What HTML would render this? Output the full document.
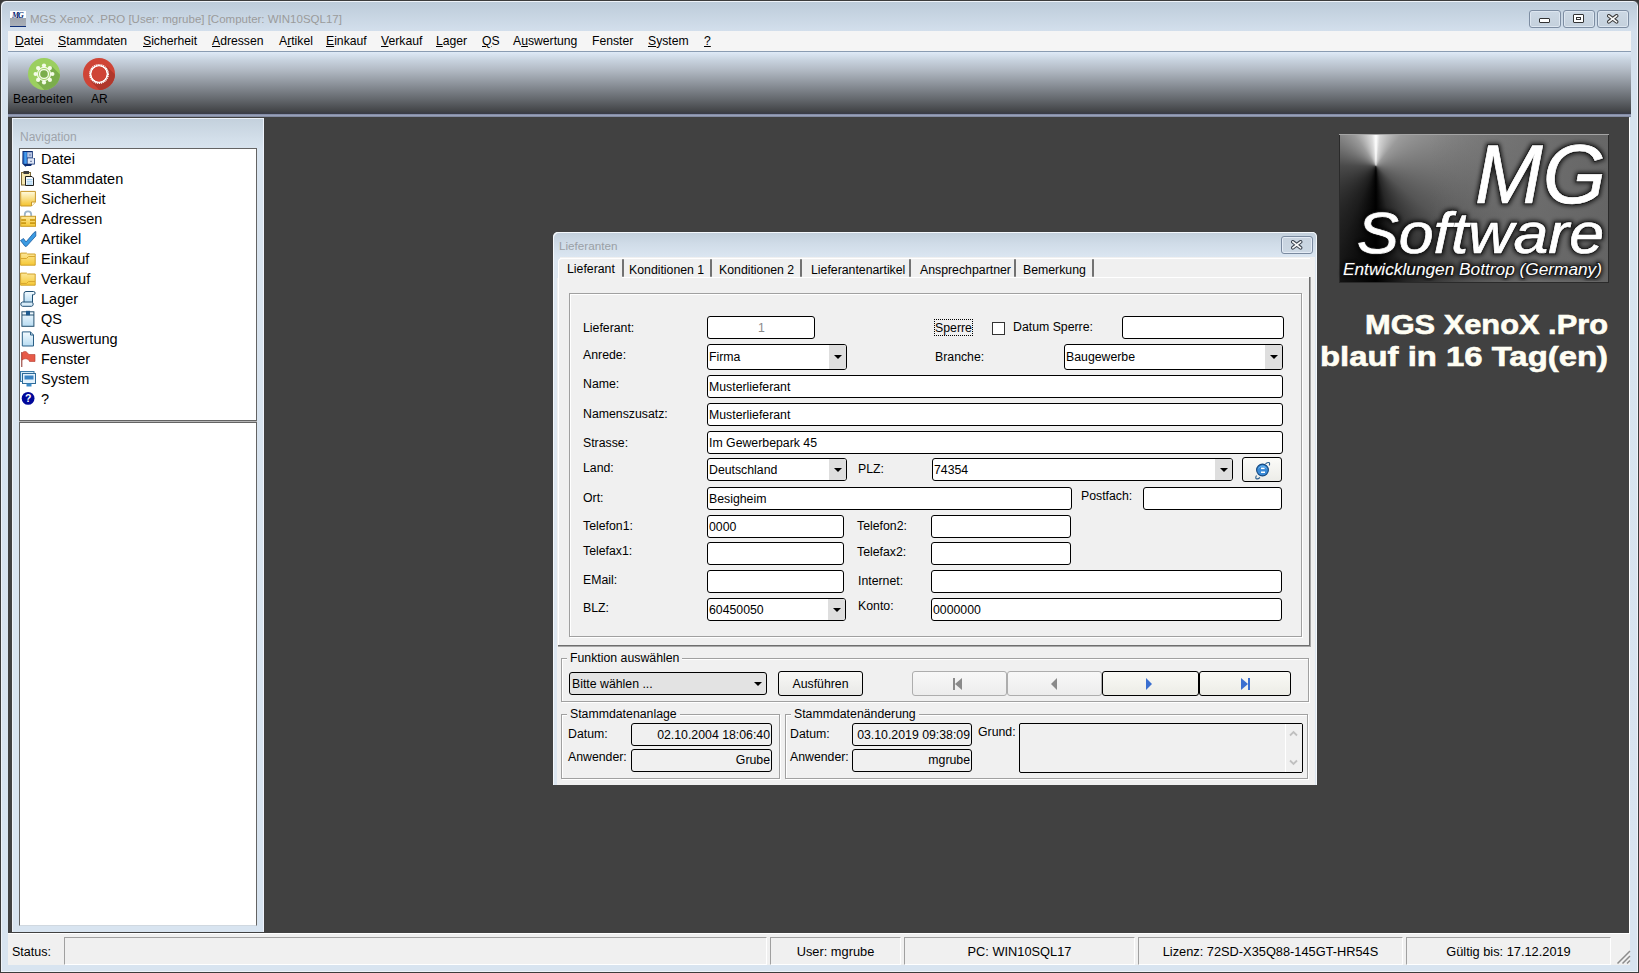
<!DOCTYPE html>
<html><head><meta charset="utf-8">
<style>
*{margin:0;padding:0;box-sizing:border-box}
html,body{width:1639px;height:973px;overflow:hidden;background:#3a3a3a}
body{font-family:"Liberation Sans",sans-serif;position:relative;color:#000}
.a{position:absolute}
#win{left:0;top:0;width:1639px;height:973px;background:linear-gradient(#bccbd9 0px,#d3dfec 30px,#d7e3ef 120px,#d8e4f0 973px);border:1px solid #3c3c3c;border-radius:6px 6px 0 0;box-shadow:inset 1px 1px 0 #eef3f9,inset -1px -1px 0 #eef3f9}
#title{left:30px;top:13px;font-size:11.5px;color:#9b9b9b;white-space:nowrap}
#menubar{left:8px;top:31px;width:1623px;height:21px;background:#f5f5f5;border-bottom:1px solid #8a9cb2}
.mi{position:absolute;top:3px;font-size:12.2px;white-space:nowrap}
.mi u{text-decoration:underline;text-underline-offset:1px}
#toolbar{left:8px;top:52px;width:1623px;height:62px;background:linear-gradient(#dfeaf7 0px,#c8d3df 8px,#b2bac4 18px,#8a9098 33px,#62666b 48px,#434548 59px,#3a3c46 61px)}
#tbline{left:8px;top:114px;width:1623px;height:3px;background:linear-gradient(#7c84a0,#98a0b8 50%,#7a8298)}
#mdi{left:8px;top:117px;width:1621px;height:816px;background:#414141;box-shadow:1px 1px 0 #fff}
#nav{left:12px;top:118px;width:252px;height:814px;background:linear-gradient(#c3d0dc,#d2dee9 20px,#d9e4ef 32px,#d8e4f0)}
.nl{left:41px;font-size:14.5px;line-height:20px;white-space:nowrap}
#status{left:8px;top:933px;width:1622px;height:32px;background:#f0f0f0;border-top:1px solid #fff}
.sp{position:absolute;top:3px;height:28px;border-top:1px solid #a0a0a0;border-left:1px solid #a0a0a0;border-right:1px solid #fff;border-bottom:1px solid #fff;font-size:12.8px;text-align:center;line-height:26px;padding-top:1px;white-space:nowrap}
.lb{position:absolute;font-size:12.3px;line-height:14px;white-space:nowrap}
.tx{position:absolute;background:#fff;border:1px solid #000;border-radius:3px;font-size:12.3px;white-space:nowrap;padding-left:1px;padding-top:1px;overflow:hidden}
.dd{position:absolute;right:0;top:0;bottom:0;width:17px;background:#dedede}
.dd:after{content:"";position:absolute;left:5px;top:50%;margin-top:-2px;border-left:4px solid transparent;border-right:4px solid transparent;border-top:4px solid #000}
.gb{position:absolute;border:1px solid #c0c0c0;box-shadow:inset 1px 1px 0 #fff,1px 1px 0 #fff}
.gt{position:absolute;background:#f0f0f0;font-size:12.3px;line-height:14px;padding:0 3px;white-space:nowrap}
.tsep{top:259px;width:2px;height:18px;background:#727272;border-radius:1px}
.nb{top:671px;height:25px;border:1px solid #000;border-radius:3px;background:linear-gradient(#f8f8f8,#ececec)}
</style></head><body>
<div id="win" class="a"></div>
<div class="a" style="left:10px;top:11px;width:16px;height:16px;background:linear-gradient(#fff 0,#fff 7px,#9ea4ad 7px,#aab0b8 15px,#10307a 15px);"></div>
<div class="a" style="left:12px;top:11px;font:bold italic 8px 'Liberation Serif',serif;color:#001a6e;letter-spacing:-1px">MG</div>
<div id="title" class="a">MGS XenoX .PRO [User: mgrube] [Computer: WIN10SQL17]</div>
<!-- window buttons -->
<div class="a" style="left:1529px;top:10px;width:32px;height:18px;border:1px solid #7d8da2;border-radius:3px;background:linear-gradient(#ccd8e4,#c4d0dc);box-shadow:inset 0 0 0 1px #dde6f0"><div class="a" style="left:9px;top:7px;width:11px;height:5px;border:1px solid #333;background:#fff;border-radius:1px"></div></div>
<div class="a" style="left:1563px;top:10px;width:32px;height:18px;border:1px solid #7d8da2;border-radius:3px;background:linear-gradient(#ccd8e4,#c4d0dc);box-shadow:inset 0 0 0 1px #dde6f0"><div class="a" style="left:9px;top:3px;width:11px;height:9px;border:1px solid #333;background:#fff;border-radius:1px"><div class="a" style="left:2px;top:2px;width:5px;height:3px;border:1px solid #333"></div></div></div>
<div class="a" style="left:1597px;top:10px;width:32px;height:18px;border:1px solid #7d8da2;border-radius:3px;background:linear-gradient(#ccd8e4,#c4d0dc);box-shadow:inset 0 0 0 1px #dde6f0"><svg class="a" style="left:9px;top:3px" width="12" height="10" viewBox="0 0 12 10"><path d="M1.8 1.8 L9.6 7.8 M9.6 1.8 L1.8 7.8" stroke="#3a3a3a" stroke-width="3.6" stroke-linecap="round"/><path d="M1.8 1.8 L9.6 7.8 M9.6 1.8 L1.8 7.8" stroke="#fafafa" stroke-width="1.7" stroke-linecap="round"/></svg></div>
<div id="menubar" class="a">
<span class="mi" style="left:7px"><u>D</u>atei</span>
<span class="mi" style="left:50px"><u>S</u>tammdaten</span>
<span class="mi" style="left:135px"><u>S</u>icherheit</span>
<span class="mi" style="left:204px"><u>A</u>dressen</span>
<span class="mi" style="left:271px">A<u>r</u>tikel</span>
<span class="mi" style="left:318px"><u>E</u>inkauf</span>
<span class="mi" style="left:373px"><u>V</u>erkauf</span>
<span class="mi" style="left:428px"><u>L</u>ager</span>
<span class="mi" style="left:474px"><u>Q</u>S</span>
<span class="mi" style="left:505px">A<u>u</u>swertung</span>
<span class="mi" style="left:584px">Fenster</span>
<span class="mi" style="left:640px"><u>S</u>ystem</span>
<span class="mi" style="left:696px"><u>?</u></span>
</div>
<div id="toolbar" class="a"></div>
<div id="tbline" class="a"></div>
<!-- toolbar icons -->
<svg class="a" style="left:27px;top:57px" width="34" height="34" viewBox="0 0 34 34">
 <defs><clipPath id="cg"><circle cx="17" cy="17" r="16"/></clipPath></defs>
 <circle cx="17" cy="17" r="16" fill="#9bcf5f"/>
 <path d="M24.8 9.2 L54.8 39.2 L39.2 54.8 L9.2 24.8 Z" fill="#7bad4c" clip-path="url(#cg)"/>
 <g fill="#f4fbe8">
  <circle cx="17" cy="17" r="7.2"/>
  <circle cx="17" cy="8.6" r="2.1"/><circle cx="17" cy="25.4" r="2.1"/><circle cx="8.6" cy="17" r="2.1"/><circle cx="25.4" cy="17" r="2.1"/>
  <circle cx="11.1" cy="11.1" r="2.1"/><circle cx="22.9" cy="11.1" r="2.1"/><circle cx="11.1" cy="22.9" r="2.1"/><circle cx="22.9" cy="22.9" r="2.1"/>
 </g>
 <circle cx="17" cy="17" r="5.6" fill="none" stroke="#9bcf5f" stroke-width="0.9"/>
 <circle cx="17" cy="17" r="3.8" fill="#7bad4c"/>
</svg>
<svg class="a" style="left:82px;top:57px" width="34" height="34" viewBox="0 0 34 34">
 <defs><clipPath id="cr"><circle cx="17" cy="17" r="16"/></clipPath></defs>
 <circle cx="17" cy="17" r="16" fill="#cf4436"/>
 <path d="M24.8 9.2 L54.8 39.2 L39.2 54.8 L9.2 24.8 Z" fill="#b0382c" clip-path="url(#cr)"/>
 <circle cx="17" cy="17" r="9" fill="none" stroke="#fff" stroke-width="2" stroke-dasharray="1.1 0.75"/>
 <circle cx="17" cy="17" r="8.3" fill="none" stroke="#fff" stroke-width="1.6"/>
 <circle cx="17" cy="17" r="7.4" fill="#cf4436"/>
</svg>
<div class="a" style="left:13px;top:92px;font-size:12px;letter-spacing:0.2px;color:#000">Bearbeiten</div>
<div class="a" style="left:91px;top:92px;font-size:12px;color:#000">AR</div>
<div id="mdi" class="a"></div>
<div id="nav" class="a"></div>
<div class="a" style="left:12px;top:118px;width:252px;height:1px;background:#eef3f9"></div>
<div class="a" style="left:12px;top:118px;width:1px;height:814px;background:#eef3f9"></div>
<div class="a" style="left:263px;top:118px;width:1px;height:814px;background:#eef3fc"></div>
<div class="a" style="left:20px;top:130px;font-size:12px;color:#9ea4ab">Navigation</div>
<div class="a" style="left:19px;top:148px;width:238px;height:273px;background:#fff;border:1px solid #646464"></div>
<div class="a" style="left:19px;top:421px;width:238px;height:1px;background:#b4b4b4"></div>
<div class="a" style="left:19px;top:422px;width:238px;height:504px;background:#fff;border:1px solid #646464;border-bottom-color:#d0d8e0"></div>
<div class="a nl" style="top:149px">Datei</div>
<div class="a nl" style="top:169px">Stammdaten</div>
<div class="a nl" style="top:189px">Sicherheit</div>
<div class="a nl" style="top:209px">Adressen</div>
<div class="a nl" style="top:229px">Artikel</div>
<div class="a nl" style="top:249px">Einkauf</div>
<div class="a nl" style="top:269px">Verkauf</div>
<div class="a nl" style="top:289px">Lager</div>
<div class="a nl" style="top:309px">QS</div>
<div class="a nl" style="top:329px">Auswertung</div>
<div class="a nl" style="top:349px">Fenster</div>
<div class="a nl" style="top:369px">System</div>
<div class="a nl" style="top:389px">?</div>
<svg class="a" style="left:20px;top:149px" width="18" height="260" viewBox="0 0 18 260">
 <defs>
 <linearGradient id="gy" x1="0" y1="0" x2="0" y2="1"><stop offset="0" stop-color="#fffbe0"/><stop offset="1" stop-color="#f4c22c"/></linearGradient>
 <linearGradient id="gy2" x1="0" y1="0" x2="0" y2="1"><stop offset="0" stop-color="#fde79a"/><stop offset="1" stop-color="#f5c834"/></linearGradient>
 <linearGradient id="gb" x1="0" y1="0" x2="0" y2="1"><stop offset="0" stop-color="#f4fbff"/><stop offset="1" stop-color="#b8dcf2"/></linearGradient>
 <linearGradient id="gbl" x1="0" y1="0" x2="1" y2="0"><stop offset="0" stop-color="#1c5cc0"/><stop offset="0.5" stop-color="#4aa4ee"/><stop offset="1" stop-color="#2a70d0"/></linearGradient>
 </defs>
 <!-- Datei: filing cabinet -->
 <path d="M2.5 2 H12.8 V9 H14.8 V15.5 H12 L11 17 H6.5 L5.5 17.8 L2.3 14.8 Z" fill="#0c2c70"/>
 <rect x="3.3" y="3" width="3.8" height="11.8" fill="url(#gbl)"/>
 <rect x="7.2" y="3.2" width="4.8" height="5.3" fill="#b9c8e6"/>
 <rect x="7.6" y="9.3" width="6.4" height="5.4" fill="#dde5f5"/>
 <rect x="9" y="5.5" width="2" height="1" fill="#6878a0"/>
 <rect x="10" y="11.8" width="2" height="1" fill="#6878a0"/>
 <!-- Stammdaten: clipboard -->
 <rect x="1.5" y="23.5" width="9" height="12.5" fill="#f4e6b0" stroke="#7d6a38"/>
 <rect x="3.5" y="22" width="5.5" height="3" fill="#3c3c3c"/>
 <path d="M5.5 27.5 H12 L13.5 29 V36.5 H5.5 Z" fill="#f6faff" stroke="#1e1e1e"/>
 <rect x="6.8" y="30" width="5.7" height="1.3" fill="#9fcdee"/>
 <rect x="6.8" y="32.2" width="5.7" height="1.3" fill="#9fcdee"/>
 <rect x="6.8" y="34.4" width="5.7" height="1.3" fill="#9fcdee"/>
 <!-- Sicherheit: sticky note -->
 <path d="M0.7 42.4 H15.4 V53 L11.5 57 H0.7 Z" fill="url(#gy)" stroke="#c9982a"/>
 <path d="M11.5 57 V53 H15.4" fill="#fffce8" stroke="#c9982a"/>
 <!-- Adressen: lock -->
 <path d="M4.8 67.5 V65.5 A3.2 3.2 0 0 1 11.2 65.5 V67.5" fill="none" stroke="#9cb4c8" stroke-width="1.8"/>
 <rect x="0.7" y="67.3" width="14.8" height="10" fill="url(#gy2)" stroke="#c99a26"/>
 <rect x="1.2" y="70.2" width="4.8" height="1.6" fill="#c8940e"/><rect x="10" y="70.2" width="5" height="1.6" fill="#c8940e"/>
 <rect x="1.2" y="73.3" width="4.8" height="1.6" fill="#c8940e"/><rect x="10" y="73.3" width="5" height="1.6" fill="#c8940e"/>
 <!-- Artikel: check -->
 <path d="M0.5 91.5 L3.5 89.5 L6 93 L14 83.5 L15.8 82.5 L15.8 87 L6.5 97.3 L5 97.3 Z" fill="#3b9be2" stroke="#1a5a9e" stroke-width="0.8" stroke-linejoin="round"/>
 <!-- Einkauf folder -->
 <path d="M0.6 104.1 H6.5 L7.5 105 H15.2 V116.2 H0.6 Z" fill="url(#gy2)" stroke="#d1a22a"/>
 <path d="M0.8 109.5 H6.5 L8.5 107.5 H15" fill="none" stroke="#d9a830" stroke-width="1"/>
 <!-- Verkauf folder -->
 <path d="M0.6 124.1 H6.5 L7.5 125 H15.2 V136.2 H0.6 Z" fill="url(#gy2)" stroke="#d1a22a"/>
 <path d="M0.8 134.5 H6.5 L8.5 132.5 H15" fill="none" stroke="#d9a830" stroke-width="1"/>
 <!-- Lager scroll -->
 <path d="M4 153 V144.5 A2 2 0 0 1 6 142.5 H13.5 A1.6 1.6 0 0 1 13.5 145.7 H12.5 V153" fill="url(#gb)" stroke="#1e4e72" stroke-width="1"/>
 <path d="M2.5 153 H11.5 A2.2 2.2 0 0 1 11.5 157.3 H2.5 A2.2 2.2 0 0 1 2.5 153 Z" fill="#d8ecf8" stroke="#1e4e72" stroke-width="1"/>
 <!-- QS box -->
 <rect x="1.9" y="162.8" width="12" height="14.5" fill="url(#gb)" stroke="#26506e"/>
 <path d="M2 166 H14" stroke="#26506e" stroke-width="1"/>
 <rect x="6" y="161.8" width="4" height="4.5" fill="#1f5a8e"/>
 <!-- Auswertung doc -->
 <path d="M2.3 182.9 H10.5 L13.5 186 V197 H2.3 Z" fill="url(#gb)" stroke="#2b5f86"/>
 <path d="M10.5 182.9 V186 H13.5" fill="none" stroke="#2b5f86"/>
 <!-- Fenster flag -->
 <path d="M1.8 203 V218" stroke="#8a2a22" stroke-width="1"/>
 <path d="M2 204.5 C3 202 6 201.5 8 204.5 L8.5 205.5 H15 V212.5 H9.5 C8.5 209.5 5 209 2 211 Z" fill="#e65a48" stroke="#b23a2e" stroke-width="0.6"/>
 <!-- System monitor -->
 <rect x="0.5" y="222.5" width="13.5" height="10" fill="#d4eaf8" stroke="#3a7aa8"/>
 <rect x="2.5" y="224.5" width="13" height="10" fill="#e4f2fc" stroke="#2e6a98"/>
 <rect x="4.5" y="226.5" width="9" height="4" fill="#3a84c4"/>
 <rect x="6.5" y="234.5" width="5" height="3" fill="#3a8ac8"/>
 <!-- ? -->
 <circle cx="8.1" cy="249.4" r="6.4" fill="#00089a"/>
 <text x="8.1" y="253.4" font-family="Liberation Sans" font-weight="bold" font-size="10.5" fill="#fff" text-anchor="middle">?</text>
</svg>
<div class="a" style="left:1339px;top:134px;width:270px;height:149px;background:#2a2a2a;border-top:1px solid #a4a4a4"></div>
<div class="a" style="left:1340px;top:135px;width:268px;height:147px;background:conic-gradient(from 0deg at 36px 31px,#fff 0deg,#d4d4d4 8deg,#9a9a9a 40deg,#757575 90deg,#555 130deg,#262626 165deg,#000 180deg,#1c1c1c 205deg,#4a4a4a 270deg,#9a9a9a 325deg,#dcdcdc 352deg,#fff 360deg)"></div>
<div class="a" style="left:1340px;top:135px;width:268px;height:147px;background:linear-gradient(90deg,rgba(110,110,110,0) 0px,rgba(110,110,110,0) 90px,rgba(108,108,108,0.85) 200px,rgba(100,100,100,0.9) 268px)"></div>
<svg class="a" style="left:1320px;top:120px" width="319" height="260" viewBox="1320 120 319 260">
 <defs>
  <filter id="glow" x="-10%" y="-10%" width="120%" height="120%">
   <feMorphology in="SourceAlpha" operator="dilate" radius="1" result="d"/>
   <feGaussianBlur in="d" stdDeviation="2" result="b"/>
   <feFlood flood-color="#000" flood-opacity="0.75"/>
   <feComposite in2="b" operator="in" result="s"/>
   <feMerge><feMergeNode in="s"/><feMergeNode in="SourceGraphic"/></feMerge>
  </filter>
 </defs>
 <defs><g id="lt" font-family="Liberation Sans" font-style="italic">
  <text x="1475" y="203" font-size="83" textLength="131" lengthAdjust="spacingAndGlyphs">MG</text>
  <text x="1357" y="252.5" font-size="58" textLength="247" lengthAdjust="spacingAndGlyphs">Software</text>
</g>
 <g id="ls" font-family="Liberation Sans" font-style="italic"><text x="1343" y="274.5" font-size="16.8" textLength="259" lengthAdjust="spacingAndGlyphs">Entwicklungen Bottrop (Germany)</text></g></defs>
 <use href="#lt" filter="url(#glow)" fill="#fff" stroke="#1a1a1a" stroke-width="2.4"/>
 <use href="#lt" fill="#fff" stroke="#fff" stroke-width="0.7"/>
 <use href="#ls" filter="url(#glow)" fill="#fff" stroke="#1a1a1a" stroke-width="1.6"/>
 <use href="#ls" fill="#fff"/>
 <g font-family="Liberation Sans" font-weight="bold" fill="#fffef4" stroke="#fffef4" stroke-width="0.6">
  <text x="1365" y="333.7" font-size="27" textLength="243" lengthAdjust="spacingAndGlyphs">MGS XenoX .Pro</text>
  <text x="1320" y="365.8" font-size="27" textLength="288" lengthAdjust="spacingAndGlyphs">blauf in 16 Tag(en)</text>
 </g>
</svg>
<!-- dialog frame -->
<div class="a" style="left:553px;top:232px;width:764px;height:553px;border-radius:5px 5px 0 0;background:linear-gradient(#c2cfdb 0px,#d0dce8 12px,#dbe6f1 25px,#dce6f0 40px,#dce6f0 553px);box-shadow:inset 1px 1px 0 #f4f8fc,inset -1px 0 0 #f4f8fc"></div>
<div class="a" style="left:559px;top:239px;font-size:11.7px;color:#9aa0a6">Lieferanten</div>
<div class="a" style="left:1281px;top:236px;width:32px;height:18px;border:1px solid #7a8aa0;border-radius:3px;background:linear-gradient(#c8d3df,#ccd8e4);box-shadow:inset 0 0 0 1px #e4ecf6"><svg class="a" style="left:9px;top:3px" width="12" height="10" viewBox="0 0 12 10"><path d="M1.8 1.8 L9.6 7.8 M9.6 1.8 L1.8 7.8" stroke="#3c4450" stroke-width="3.6" stroke-linecap="round"/><path d="M1.8 1.8 L9.6 7.8 M9.6 1.8 L1.8 7.8" stroke="#fafafa" stroke-width="1.7" stroke-linecap="round"/></svg></div>
<!-- client -->
<div class="a" style="left:557px;top:257px;width:758px;height:528px;background:#f0f0f0"></div>
<!-- tabs -->
<div class="a" style="left:558px;top:258px;width:752px;height:1px;background:#fff"></div>
<div class="a" style="left:558px;top:258px;width:1px;height:388px;background:#fff"></div>
<div class="a" style="left:558px;top:645px;width:753px;height:2px;background:#6e6e6e;border-bottom:1px solid #a8a8a8"></div>
<div class="a" style="left:1309px;top:277px;width:2px;height:369px;background:#6e6e6e;border-right:1px solid #a8a8a8"></div>
<div class="a" style="left:559px;top:277px;width:750px;height:1px;background:#fff"></div>
<div class="a" style="left:557px;top:257px;width:3px;height:21px;background:#dce6f0"></div><div class="a" style="left:558px;top:258px;width:64px;height:20px;background:#f0f0f0;border-top:1px solid #fff;border-left:1px solid #fff;border-radius:4px 0 0 0"></div>
<div class="a tsep" style="left:622px"></div>
<div class="a tsep" style="left:710px"></div>
<div class="a tsep" style="left:800px"></div>
<div class="a tsep" style="left:909px"></div>
<div class="a tsep" style="left:1014px"></div>
<div class="a tsep" style="left:1092px"></div>
<div class="lb" style="left:567px;top:262px">Lieferant</div>
<div class="lb" style="left:629px;top:263px">Konditionen 1</div>
<div class="lb" style="left:719px;top:263px">Konditionen 2</div>
<div class="lb" style="left:811px;top:263px">Lieferantenartikel</div>
<div class="lb" style="left:920px;top:263px">Ansprechpartner</div>
<div class="lb" style="left:1023px;top:263px">Bemerkung</div>
<!-- inner groupbox -->
<div class="a" style="left:569px;top:293px;width:733px;height:344px;border:1px solid #a0a0a0;box-shadow:1px 1px 0 #fff,inset 1px 1px 0 #fff"></div>
<!-- labels -->
<div class="lb" style="left:583px;top:321px">Lieferant:</div>
<div class="lb" style="left:583px;top:348px">Anrede:</div>
<div class="lb" style="left:583px;top:377px">Name:</div>
<div class="lb" style="left:583px;top:407px">Namenszusatz:</div>
<div class="lb" style="left:583px;top:436px">Strasse:</div>
<div class="lb" style="left:583px;top:461px">Land:</div>
<div class="lb" style="left:583px;top:491px">Ort:</div>
<div class="lb" style="left:583px;top:519px">Telefon1:</div>
<div class="lb" style="left:583px;top:544px">Telefax1:</div>
<div class="lb" style="left:583px;top:573px">EMail:</div>
<div class="lb" style="left:583px;top:601px">BLZ:</div>
<div class="a" style="left:934px;top:319px;width:39px;height:17px;border:1px dotted #000"></div><div class="lb" style="left:935px;top:321px">Sperre</div>
<div class="a" style="left:992px;top:322px;width:13px;height:13px;border:1px solid #333;background:#fff"></div>
<div class="lb" style="left:1013px;top:320px">Datum Sperre:</div>
<div class="lb" style="left:935px;top:350px">Branche:</div>
<div class="lb" style="left:858px;top:462px">PLZ:</div>
<div class="lb" style="left:1081px;top:489px">Postfach:</div>
<div class="lb" style="left:857px;top:519px">Telefon2:</div>
<div class="lb" style="left:857px;top:545px">Telefax2:</div>
<div class="lb" style="left:858px;top:574px">Internet:</div>
<div class="lb" style="left:858px;top:599px">Konto:</div>
<!-- fields -->
<div class="tx" style="left:707px;top:316px;width:108px;height:23px;line-height:21px;text-align:center;color:#8a8a8a">1</div>
<div class="tx" style="left:1122px;top:316px;width:162px;height:23px"></div>
<div class="tx" style="left:707px;top:344px;width:140px;height:26px;line-height:24px;padding-top:0">Firma<div class="dd"></div></div>
<div class="tx" style="left:1064px;top:344px;width:219px;height:26px;line-height:24px;padding-top:0">Baugewerbe<div class="dd"></div></div>
<div class="tx" style="left:707px;top:375px;width:576px;height:23px;line-height:21px">Musterlieferant</div>
<div class="tx" style="left:707px;top:403px;width:576px;height:23px;line-height:21px">Musterlieferant</div>
<div class="tx" style="left:707px;top:431px;width:576px;height:23px;line-height:21px">Im Gewerbepark 45</div>
<div class="tx" style="left:707px;top:458px;width:140px;height:23px;line-height:21px">Deutschland<div class="dd"></div></div>
<div class="tx" style="left:932px;top:458px;width:301px;height:23px;line-height:21px">74354<div class="dd"></div></div>
<div class="a" style="left:1242px;top:457px;width:40px;height:25px;border:1px solid #000;border-radius:3px;background:linear-gradient(#fbfbf8,#ecece8)"><svg class="a" style="left:10px;top:2px" width="20" height="20" viewBox="0 0 20 20"><path d="M3.5 15.5 C1.5 19 4 20 7 17.5 M12.5 3.8 C15.5 1.8 17.5 2 16.2 5.5" fill="none" stroke="#2a5f8e" stroke-width="1.1"/><circle cx="9.5" cy="10" r="5.9" fill="#3a8ad6" stroke="#164a80" stroke-width="1.1"/><path d="M5.5 8.5 A4.5 4.5 0 0 1 13.5 8.5" fill="none" stroke="#6ab8f2" stroke-width="1"/><rect x="8" y="7.6" width="3.6" height="1.5" fill="#fff"/><rect x="8" y="11.5" width="4" height="1.5" fill="#fff"/></svg></div>
<div class="tx" style="left:707px;top:487px;width:365px;height:23px;line-height:21px">Besigheim</div>
<div class="tx" style="left:1143px;top:487px;width:139px;height:23px"></div>
<div class="tx" style="left:707px;top:515px;width:137px;height:23px;line-height:21px">0000</div>
<div class="tx" style="left:931px;top:515px;width:140px;height:23px"></div>
<div class="tx" style="left:707px;top:542px;width:137px;height:23px"></div>
<div class="tx" style="left:931px;top:542px;width:140px;height:23px"></div>
<div class="tx" style="left:707px;top:570px;width:137px;height:23px"></div>
<div class="tx" style="left:931px;top:570px;width:351px;height:23px"></div>
<div class="tx" style="left:707px;top:598px;width:139px;height:23px;line-height:21px">60450050<div class="dd"></div></div>
<div class="tx" style="left:931px;top:598px;width:351px;height:23px;line-height:21px">0000000</div>
<!-- Funktion groupbox -->
<div class="a" style="left:561px;top:658px;width:748px;height:44px;border:1px solid #a0a0a0;box-shadow:1px 1px 0 #fff,inset 1px 1px 0 #fff"></div>
<div class="gt" style="left:567px;top:651px">Funktion auswählen</div>
<div class="tx" style="left:569px;top:672px;width:198px;height:23px;line-height:21px;background:#e3e3e3;padding-left:2px">Bitte wählen ...<div class="dd" style="background:transparent"></div></div>
<div class="a" style="left:778px;top:671px;width:85px;height:25px;border:1px solid #000;border-radius:3px;background:linear-gradient(#f8f8f6,#e8e8e6);font-size:12.3px;line-height:23px;padding-top:1px;text-align:center">Ausführen</div>
<div class="a nb" style="left:912px;width:95px;border-color:#adadad"><svg class="a" style="left:39px;top:6px" width="10" height="12" viewBox="0 0 10 12"><rect x="1" y="0" width="2" height="12" fill="#8a8a8a"/><path d="M10 0 L3 6 L10 12Z" fill="#8a8a8a"/></svg></div>
<div class="a nb" style="left:1007px;width:95px;border-color:#adadad"><svg class="a" style="left:42px;top:6px" width="8" height="12" viewBox="0 0 8 12"><path d="M7 0 L1 6 L7 12Z" fill="#8a8a8a"/></svg></div>
<div class="a nb" style="left:1102px;width:97px;border-color:#000;background:linear-gradient(#fafaf6,#ececE6)"><svg class="a" style="left:42px;top:6px" width="8" height="12" viewBox="0 0 8 12"><path d="M1 0 L7 6 L1 12Z" fill="#3a6fd0"/></svg></div>
<div class="a nb" style="left:1199px;width:92px;border-color:#000;background:linear-gradient(#fafaf6,#ececE6)"><svg class="a" style="left:41px;top:6px" width="10" height="12" viewBox="0 0 10 12"><rect x="7" y="0" width="2" height="12" fill="#3a6fd0"/><path d="M0 0 L7 6 L0 12Z" fill="#3a6fd0"/></svg></div>
<!-- Stammdatenanlage -->
<div class="a" style="left:561px;top:714px;width:219px;height:65px;border:1px solid #a0a0a0;box-shadow:1px 1px 0 #fff,inset 1px 1px 0 #fff"></div>
<div class="gt" style="left:567px;top:707px">Stammdatenanlage</div>
<div class="lb" style="left:568px;top:727px">Datum:</div>
<div class="lb" style="left:568px;top:750px">Anwender:</div>
<div class="tx" style="left:631px;top:723px;width:141px;height:23px;line-height:21px;background:#f0f0f0;text-align:right;padding-right:1px">02.10.2004 18:06:40</div>
<div class="tx" style="left:631px;top:749px;width:141px;height:23px;line-height:21px;padding-top:0;background:#f0f0f0;text-align:right;padding-right:1px">Grube</div>
<!-- Stammdatenänderung -->
<div class="a" style="left:785px;top:714px;width:523px;height:65px;border:1px solid #a0a0a0;box-shadow:1px 1px 0 #fff,inset 1px 1px 0 #fff"></div>
<div class="gt" style="left:791px;top:707px">Stammdatenänderung</div>
<div class="lb" style="left:790px;top:727px">Datum:</div>
<div class="lb" style="left:790px;top:750px">Anwender:</div>
<div class="tx" style="left:852px;top:723px;width:120px;height:23px;line-height:21px;background:#f0f0f0;text-align:right;padding-right:1px">03.10.2019 09:38:09</div>
<div class="tx" style="left:852px;top:749px;width:120px;height:23px;line-height:21px;padding-top:0;background:#f0f0f0;text-align:right;padding-right:1px">mgrube</div>
<div class="lb" style="left:978px;top:725px">Grund:</div>
<div class="tx" style="left:1019px;top:723px;width:284px;height:50px;background:#f0f0f0;border-radius:2px"><div class="a" style="right:0;top:0;width:17px;height:48px;background:#f0f0f0;border-left:1px solid #fff"></div><svg class="a" style="right:4px;top:5px" width="9" height="38" viewBox="0 0 9 38"><path d="M1 6.5 L4.5 3 L8 6.5 M1 31.5 L4.5 35 L8 31.5" fill="none" stroke="#c0c0c0" stroke-width="1.8"/></svg></div>
<div id="status" class="a">
<span class="a" style="left:4px;top:11px;font-size:12.5px">Status:</span>
<div class="sp" style="left:56px;width:703px"></div>
<div class="sp" style="left:762px;width:131px">User: mgrube</div>
<div class="sp" style="left:896px;width:231px">PC: WIN10SQL17</div>
<div class="sp" style="left:1130px;width:265px">Lizenz: 72SD-X35Q88-145GT-HR54S</div>
<div class="sp" style="left:1398px;width:205px">Gültig bis: 17.12.2019</div>
</div>
<svg class="a" style="left:1616px;top:950px" width="15" height="15" viewBox="0 0 15 15"><path d="M1.5 13.5 L14 1 M6.5 13.5 L14 6 M11 13.5 L14 10.5" stroke="#8c8c8c" stroke-width="1.5"/></svg>
</body></html>
